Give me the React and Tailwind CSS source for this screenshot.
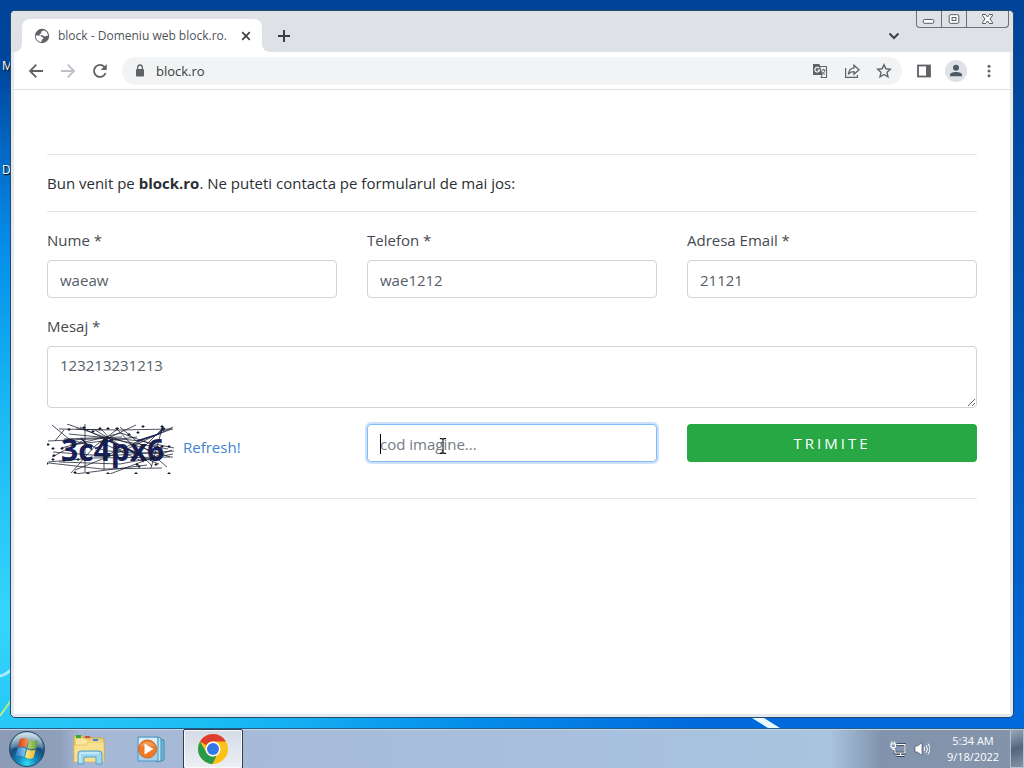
import React from "react";

const fieldClass =
  "block w-full rounded-sm border border-[#ced4da] bg-white text-[15px] text-[#565e66] outline-none";

function Field({ id, label, value }) {
  return (
    <div>
      <label htmlFor={id} className="mb-2 block leading-6">{label}</label>
      <input id={id} defaultValue={value} className={`${fieldClass} h-[38px] px-3 pt-0.5`} />
    </div>
  );
}

function Globe() {
  return (
    <svg viewBox="0 0 16 16" className="size-4 shrink-0" aria-hidden="true">
      <circle cx="8" cy="8" r="7.2" fill="#5f6368" />
      <path d="M1.800 7.500c2.200-.2 4.500-.2 5.400 1 .6.900 1.900.4 2.100 1.400.2 1-.7 1.100-1.200 1.600-.5.600-.2 1.500-.9 2.500C4 13.600 1.600 11 1.800 7.500ZM9.500 2.200c-.3.900-1.800.7-2.200 1.500-.3.700.3 1.300-.2 1.800-.5.500-1.100.2-1.400.9-.2.700.5 1.100 1.300 1 1.200-.2 2.100-.2 2.800.5.700.8 1.600.7 2.300.1.600-.5 1.300-.1 1.900-.1C13.900 5.200 12.200 2.900 9.500 2.200Z" fill="#fff" />
    </svg>
  );
}

function WindowButtons() {
  return (
    <div className="flex h-[17px] rounded-b-sm border border-t-0 border-[#6c7178]">
      <button aria-label="Minimize" className="flex w-[25px] items-center justify-center border-r border-[#6c7178]">
        <svg viewBox="0 0 25 16" className="h-4 w-[25px]" fill="#fff" stroke="#50555b"><rect x="6.500" y="8.500" width="11" height="4" rx="1.500" /></svg>
      </button>
      <button aria-label="Maximize" className="flex w-[25px] items-center justify-center border-r border-[#6c7178]">
        <svg viewBox="0 0 25 16" className="h-4 w-[25px]" fill="#fff" stroke="#50555b"><rect x="7.500" y="3.500" width="10" height="9" rx="1.500" /><rect x="10.500" y="6.500" width="4" height="3" /></svg>
      </button>
      <button aria-label="Close" className="flex w-[41px] items-center justify-center">
        <svg viewBox="0 0 41 16" className="h-4 w-[41px]" fill="#fff" stroke="#50555b"><path d="M15.500 3.500h3l2 2.500 2-2.500h3v1L23 8l2.500 3.500v1h-3l-2-2.500-2 2.500h-3v-1L18 8l-2.500-3.500Z" /></svg>
      </button>
    </div>
  );
}

function TabStrip() {
  return (
    <div className="flex h-[41px] items-start justify-between rounded-t-[4px] bg-[#dee1e6] pl-[11px] pr-1">
      <div className="flex items-center pt-2">
        <div className="relative flex h-[33px] w-60 items-center rounded-t-lg bg-white pl-3 pr-2">
          <svg viewBox="0 0 8 8" className="absolute bottom-0 -left-2 size-2" fill="#fff"><path d="M8 0v8H0c4.400 0 8-3.600 8-8Z" /></svg>
          <svg viewBox="0 0 8 8" className="absolute bottom-0 -right-2 size-2" fill="#fff"><path d="M0 0v8h8C3.600 8 0 4.400 0 0Z" /></svg>
          <Globe />
          <span className="ml-2 flex-1 whitespace-nowrap text-[12px] text-[#505458]">block - Domeniu web block.ro.</span>
          <button aria-label="Close tab" className="flex size-4 items-center justify-center">
            <svg viewBox="0 0 16 16" className="size-4" fill="none" stroke="#3c4043" strokeWidth="1.700"><path d="m4.200 4.200 7.600 7.600m0-7.600-7.600 7.600" /></svg>
          </button>
        </div>
        <button aria-label="New tab" className="ml-3.5 flex size-4 items-center justify-center">
          <svg viewBox="0 0 16 16" className="size-4" fill="none" stroke="#3c4043" strokeWidth="2"><path d="M8 2v12M2 8h12" /></svg>
        </button>
      </div>
      <div className="flex items-start">
        <button aria-label="Search tabs" className="mr-3.5 mt-[17px] flex size-4 items-center justify-center">
          <svg viewBox="0 0 16 16" className="size-4" fill="none" stroke="#3c4043" strokeWidth="2"><path d="m3.500 5.500 4.500 4.500 4.500-4.500" /></svg>
        </button>
        <WindowButtons />
      </div>
    </div>
  );
}

function IconButton({ label, children, className = "" }) {
  return (
    <button aria-label={label} className={`flex shrink-0 items-center justify-center ${className}`}>
      <svg viewBox="0 0 16 16" className="size-4" fill="none" stroke="#5f6368" strokeWidth="1.800">{children}</svg>
    </button>
  );
}

function Toolbar() {
  return (
    <div className="flex h-[38px] items-center border-b border-[#dcdee1] bg-white pl-3.5 pr-[13px]">
      <div className="flex gap-4">
        <IconButton label="Back"><path d="M15 8H2m6.300-6.300L2 8l6.300 6.300" /></IconButton>
        <IconButton label="Forward"><path d="M1 8h13M7.700 1.700 14 8l-6.300 6.300" stroke="#bdc1c6" /></IconButton>
        <IconButton label="Reload"><path d="M13.600 10A6 6 0 1 1 12.500 4" /><path d="M14.700 1v6h-6Z" fill="#5f6368" stroke="none" /></IconButton>
      </div>
      <div className="ml-3.5 flex h-7 flex-1 items-center rounded-full bg-[#f1f3f4] pl-2.5 pr-2.5">
        <svg viewBox="0 0 16 16" className="size-4 shrink-0" aria-hidden="true"><rect x="4" y="6" width="8" height="7.500" rx="1" fill="#5f6368" /><path d="M5.700 7V4.300a2.300 2.300 0 0 1 4.600 0V7" fill="none" stroke="#5f6368" strokeWidth="1.300" /></svg>
        <input aria-label="Address" defaultValue="block.ro" className="ml-2 min-w-0 flex-1 bg-transparent pt-0.5 text-[13px] text-[#3a3d41] outline-none" />
        <div className="flex gap-4">
          <IconButton label="Translate">
            <path d="M6.500 3.500H14.500v11H9" strokeWidth="1.100" />
            <path d="M1 1h6.500l3 11H1Z" fill="#5f6368" stroke="none" />
            <path d="M7.200 5.200A2.400 2.400 0 1 0 7.600 7H5.500" stroke="#fff" strokeWidth="1.100" />
            <path d="M9.500 7h4M11.700 5.800V7m1.300 0c-.4 2-1.500 3.300-3 4.400M10 8.500c.7 1.300 1.800 2.200 3 3M8.800 14.500l1.500-2.500" strokeWidth="1" />
          </IconButton>
          <IconButton label="Share">
            <path d="M1.600 5v9.400h11.800V12" strokeWidth="1.200" />
            <path d="M10 2.200 15 6.800l-5 4.500V8.700c-2.600 0-4.400.8-5.700 2.600C4.800 7.500 6.500 5.200 10 4.800Z" strokeWidth="1.300" />
          </IconButton>
          <IconButton label="Bookmark">
            <path d="m8 1.700 1.900 4.100 4.500.5L11 9.300l1 4.500-4-2.300-4 2.300 1-4.500-3.400-3 4.500-.5Z" strokeWidth="1.400" />
          </IconButton>
        </div>
      </div>
      <IconButton label="Side panel" className="ml-3.5">
        <rect x="2" y="2.500" width="12" height="11" /><path d="M10 2h4v12h-4Z" fill="#5f6368" stroke="none" />
      </IconButton>
      <IconButton label="Profile" className="ml-[13px] size-[22px] rounded-full bg-[#dee1e6]">
        <circle cx="8" cy="4.800" r="3" fill="#505a64" stroke="none" /><path d="M2 13.300v-1.500C2 9.800 5.500 9 8 9s6 .8 6 2.800v1.500Z" fill="#505a64" stroke="none" />
      </IconButton>
      <IconButton label="Menu" className="ml-3.5">
        <g fill="#5f6368" stroke="none"><circle cx="8" cy="3.200" r="1.500" /><circle cx="8" cy="8" r="1.500" /><circle cx="8" cy="12.800" r="1.500" /></g>
      </IconButton>
    </div>
  );
}

const specks = [
  [22, 6], [37, 4], [53, 5], [61, 5], [82, 11], [91, 9], [96, 3], [115, 3], [1, 21], [6, 25], [15, 25], [7, 32], [0, 40],
  [6, 36], [17, 37], [31, 36], [90, 41], [109, 41], [115, 23], [122, 23], [61, 50], [89, 50], [122, 50], [41, 50], [28, 49], [104, 36], [70, 5], [92, 43], [46, 8],
];

function Captcha() {
  return (
    <svg viewBox="0 0 128 50" className="h-[50px] w-32" role="img" aria-label="Captcha 3c4px6">
      <text x="14" y="37" fill="#17205e" fontFamily="'Open Sans', sans-serif" fontSize="30" fontWeight="700">3c4px6</text>
      <path d="M5 1 22 15M20 0l43 15 58 10M12 5l59 1 55-1M1 17l65-3 57 19M17 15l58-2M22 15l38 12 57 3M14 24l60-15 38 14M6 28l52 4 69-5M1 38l45-4 80-1M12 38l61 2 53-10M24 49 48 22 72 4M28 46l52-21 46-22M38 0v48M48 6l40 24 24 10M57 46V16L89 1M63 50l62-24M73 3l47 40M91 29l24-24-11 39M69 4l36 38M33 3l58 27M22 10l72 7 33 7M2 39l53 6 60-1M28 50l72-9M53 18l44 20M23 21l67-8M5 33l32-17M8 17l9-11M29 5l26 1 21 23M58 32 90 18l35-13" fill="none" stroke="#171b2e" strokeWidth=".75" />
      <path d="m90 17 22-7 4-5M48 25l18-10M62 17 92 30M34 14l11 12" fill="none" stroke="#171f54" strokeWidth="1.400" />
      <g stroke="#161a2c">
        {specks.map(([x, y]) => <path key={`${x}-${y}`} d={`M${x - 1.5} ${y - .5}h3M${x} ${y - 2}v3`} />)}
      </g>
      <circle cx="116" cy="5" r="2" fill="#1b203b" />
    </svg>
  );
}

function ContactForm() {
  return (
    <main className="flex-1 bg-white px-[33px] pt-16 text-[15px] text-[#454a50]">
      <p className="border-y border-[#e4e4e4] py-4 leading-6 text-[#2b2f33]">
        Bun venit pe <strong className="font-bold">block.ro</strong>. Ne puteti contacta pe formularul de mai jos:
      </p>
      <form className="border-b border-[#e4e4e4] pt-4 pb-6" onSubmit={(event) => event.preventDefault()}>
        <div className="grid grid-cols-3 gap-x-[30px]">
          <Field id="name" label="Nume *" value="waeaw" />
          <Field id="phone" label="Telefon *" value="wae1212" />
          <Field id="email" label="Adresa Email *" value="21121" />
        </div>
        <label htmlFor="message" className="mt-4 mb-2 block leading-6">Mesaj *</label>
        <textarea id="message" defaultValue="123213231213" className={`${fieldClass} h-[62px] resize-y px-3 py-1.5 leading-6`} />
        <div className="mt-4 grid grid-cols-3 gap-x-[30px]">
          <div className="flex h-[50px] items-center gap-2">
            <Captcha />
            <a href="#refresh" className="pb-1 text-[#3f83d1]">Refresh!</a>
          </div>
          <div className="relative self-start">
            <input aria-label="Cod imagine" placeholder="cod imagine..." className="block h-[38px] w-full rounded-sm border border-[#80bdff] bg-white px-3 pt-0.5 text-[15px] text-[#495057] caret-transparent shadow-[0_0_0_2px_#cde2fa] outline-none placeholder:text-[#757c83] placeholder:opacity-100" />
            <span className="absolute top-2.5 left-[13px] h-5 w-px bg-black" />
            <svg viewBox="0 0 8 18" className="absolute top-3.5 left-[72px] h-4 w-2" fill="none" stroke="#111" strokeWidth="1.200" aria-hidden="true"><path d="M.5.700H3L4 1.700 5 .7h2.500M4 1.700v14.600M.5 17.300H3l1-1 1 1h2.500" /></svg>
          </div>
          <button className="h-[38px] self-start rounded-sm bg-[#28a745] text-[15px] tracking-[3px] text-white">TRIMITE</button>
        </div>
      </form>
    </main>
  );
}

function StartOrb() {
  return (
    <svg viewBox="0 0 38 38" className="size-[38px]" aria-hidden="true">
      <defs>
        <radialGradient id="orb" cx="50%" cy="92%" r="85%"><stop offset="0" stopColor="#35dff5" /><stop offset=".3" stopColor="#168bc0" /><stop offset=".65" stopColor="#164c7c" /><stop offset="1" stopColor="#7da9bf" /></radialGradient>
        <linearGradient id="orbShine" x2="0" y2="1"><stop stopColor="#fff" stopOpacity=".65" /><stop offset="1" stopColor="#fff" stopOpacity=".1" /></linearGradient>
        <linearGradient id="flagRed"><stop stopColor="#d73c1c" /><stop offset="1" stopColor="#f79a4c" /></linearGradient>
        <linearGradient id="flagGreen"><stop stopColor="#b9d76c" /><stop offset="1" stopColor="#5e9e36" /></linearGradient>
        <linearGradient id="flagBlue"><stop stopColor="#2b79c4" /><stop offset="1" stopColor="#8bd1f2" /></linearGradient>
        <linearGradient id="flagYellow"><stop stopColor="#ffe98a" /><stop offset="1" stopColor="#f5b72b" /></linearGradient>
      </defs>
      <circle cx="19" cy="19" r="17.500" fill="url(#orb)" stroke="#294963" />
      <path d="M3 19C3 9 10 2.500 19 2.500S35 9 35 19c-7-3.500-10 2-16 1S9 16 3 19Z" fill="url(#orbShine)" />
      <path d="M12 9c3-1.700 6-1.300 8.500.5l-2 8.300c-2.700-1.800-5.500-1.700-8.500-.6Z" fill="url(#flagRed)" />
      <path d="M21.500 10c2.800 1.500 5.800 1.500 8.500 0l-2 8.200c-3 1.500-5.800 1.300-8.500-.1Z" fill="url(#flagGreen)" />
      <path d="M9.500 18.500c3-1.300 6-1.300 8.500.4l-2 8.100c-2.500-1.600-5.500-1.600-8.500-.6Z" fill="url(#flagBlue)" />
      <path d="M19 19.300c2.700 1.500 5.800 1.500 8.700.2l-2.200 8.300c-2.800 1.400-5.800 1-8.500-.5Z" fill="url(#flagYellow)" />
    </svg>
  );
}

function Taskbar() {
  return (
    <nav className="flex h-10 items-center border-t border-[#1f5f8c] bg-[linear-gradient(90deg,#8b9bb5_0,#8fa0bb_60px,#a5b8d6_80px,#a8c0df_60%,#a9c4df_81%,#8294ad_86%,#8393a9_100%)] shadow-[inset_0_1px_#cbd7e5]">
      <button aria-label="Start" className="ml-2"><StartOrb /></button>
      <button aria-label="File Explorer" className="ml-[25px]">
        <svg viewBox="0 0 36 32" className="h-8 w-9" aria-hidden="true">
          <path d="M3 5V3h9l1 2h18a2 2 0 0 1 2 2v20H3Z" fill="#edcf70" stroke="#c9a951" />
          <path d="M5 6h10l1 2h16v20H5Z" fill="#f9e69a" /><path d="M3 12h12l2-3h16v20H3Z" fill="#f8e18c" stroke="#d9b55c" strokeWidth=".6" />
          <path d="M5 2h5v3H5Z" fill="#35a848" /><path d="M14 3h5v2h-5Z" fill="#d64d32" /><path d="M22 6h5v2h-5Z" fill="#3e86cf" />
          <path d="M7 31V21q0-3 3-3h18q3 0 3 3v10h-6v-7H13v7Z" fill="#9dd8f1" stroke="#579fc7" /><path d="M9 29v-8q0-1 1-1h18" fill="none" stroke="#e2f8ff" />
        </svg>
      </button>
      <button aria-label="Media Player" className="ml-7">
        <svg viewBox="0 0 32 32" className="size-8" aria-hidden="true">
          <path d="m24 6 5 1v20l-5 2Z" fill="#69b8df" stroke="#488aab" /><path d="m21 4 5 1v23l-5 1Z" fill="#b6e6f4" stroke="#498eb3" />
          <rect x="3" y="4" width="20" height="24" fill="#a5cfea" stroke="#5096c5" /><path d="M4 5h18v7L4 20Z" fill="#d8eef8" />
          <circle cx="12.500" cy="16" r="9" fill="#ee7927" stroke="#d5641c" /><path d="M5 14a8 8 0 0 1 15 0c-4-2-11-2-15 0Z" fill="#f6a669" opacity=".7" /><path d="m9.500 10.500 9 5.500-9 5.500Z" fill="#fff" />
        </svg>
      </button>
      <button aria-label="Chrome" className="ml-4 flex h-10 w-[60px] items-center justify-center rounded-xs border border-[#333e4d] bg-[linear-gradient(180deg,#d3dbe6,#edf0f5)] shadow-[inset_0_0_0_1px_#f8fafc]">
        <svg viewBox="0 0 32 32" className="size-8" aria-hidden="true">
          <circle cx="16" cy="16" r="15" fill="#fbc116" />
          <path d="M16 16 3 8.500A15 15 0 0 1 29 8.500H16a7.500 7.500 0 0 0-6.500 3.700Z" fill="#df3d30" />
          <path d="M3 8.500 9.500 19.800a7.500 7.500 0 0 0 6.500 3.700c1.200 0 2.500-.3 3.500-.8L15.500 31A15 15 0 0 1 3 8.500Z" fill="#259b4b" />
          <circle cx="16" cy="16" r="7.500" fill="#fff" /><circle cx="16" cy="16" r="6" fill="#3478e5" />
        </svg>
      </button>
      <div className="ml-auto flex h-full items-center text-white">
        <svg viewBox="0 0 16 16" className="size-4" fill="none" aria-label="Network">
          <path d="M6.500 3.500h9v8.500H5V8.500M6.500 14.800h8M10.500 12v3" stroke="#303b49" strokeWidth="2.400" /><path d="M6.500 3.500h8.500V12H5V8.500M6.500 14.500h8M10.500 12v2.500M2 .5V3M4.500.5V3M1 3h4.500v2.500l-1 1.200H2L1 5.500ZM3.200 7v1.500H5" stroke="#fff" strokeWidth="1.200" />
        </svg>
        <svg viewBox="0 0 16 16" className="ml-2 size-4" aria-label="Volume">
          <path d="M1 5h2.500L8 1.500v13L3.500 11H1Z" fill="#fff" stroke="#465261" strokeWidth=".7" /><path d="M10 6q1.500 2 0 4m2-6q3 4 0 8m2-9.500q4 5.500 0 11" fill="none" stroke="#fff" strokeWidth="1" />
        </svg>
        <div className="mr-1 ml-2.5 w-[66px] text-center text-[11px] leading-4"><div>5:34 AM</div><div>9/18/2022</div></div>
        <button aria-label="Show desktop" className="h-full w-3.5 border border-[#b4c2d1] bg-[linear-gradient(160deg,#9aa9ba,#52667e_50%,#8594a8)]" />
      </div>
    </nav>
  );
}

export default function App() {
  return (
    <div className="flex min-h-screen flex-col overflow-hidden bg-[#0058c0] font-['Open_Sans','Noto_Sans',sans-serif]">
      <div className="relative flex flex-1 flex-col bg-[radial-gradient(ellipse_70%_75%_at_0_85%,#35d5fb_0,#19b9f4_38%,#058eea_68%,transparent),linear-gradient(180deg,#004398,#0059bd_60%,#0069dc)] px-2.5 pt-2.5 pb-2.5">
        <span className="absolute top-[58px] left-0.5 text-[12px] leading-4 text-white [text-shadow:1px_1px_1px_#000]">M</span>
        <span className="absolute top-[162px] left-0.5 text-[12px] leading-4 text-white [text-shadow:1px_1px_1px_#000]">D</span>
        <svg viewBox="0 0 12 60" className="absolute bottom-0 left-0 h-[60px] w-3" fill="none" aria-hidden="true"><path d="M0 8q6-1 12-7" stroke="#a7ebff" strokeWidth="3" /><path d="M0 48 12 31" stroke="#b3ed8c" strokeWidth="2" /></svg>
        <svg viewBox="0 0 32 10" className="absolute bottom-0 left-[750px] h-2.5 w-8" aria-hidden="true"><path d="M2 0h12l16 10H18Z" fill="#e7faff" /></svg>
        <div className="relative flex flex-1 flex-col rounded-[5px] border border-[#274a6b] bg-[#e4e9f0]">
          <TabStrip />
          <div className="mx-[3px] mb-[3px] flex flex-1 flex-col bg-white">
            <Toolbar />
            <ContactForm />
          </div>
        </div>
      </div>
      <Taskbar />
    </div>
  );
}
